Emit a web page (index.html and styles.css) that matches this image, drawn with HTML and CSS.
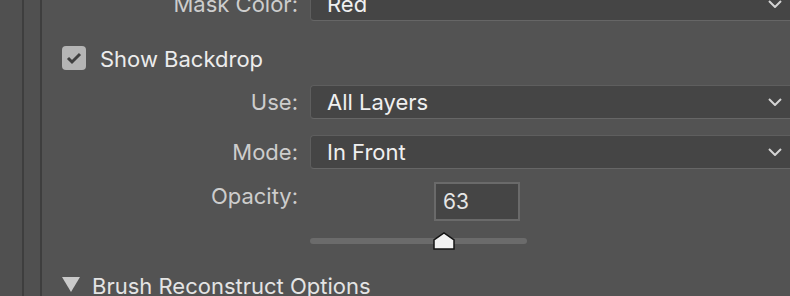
FILE: index.html
```html
<!DOCTYPE html>
<html lang="en">
<head>
    <meta charset="UTF-8">
    <title>Liquify Properties</title>
    <link rel="stylesheet" href="styles.css">
</head>
<body>
    <div class="app">
        <div class="rail"></div>
        <div class="gutter"></div>

        <div class="panel">
            <div class="field mask-row">
                <label class="field-label">Mask Color:</label>
                <div class="dropdown">
                    <span>Red</span>
                    <svg class="chevron" width="14" height="8" viewBox="0 0 14 8"><polyline points="1,1 7,7 13,1"/></svg>
                </div>
            </div>

            <div class="divider short"></div>

            <div class="check-row">
                <span class="checkbox">
                    <svg width="24" height="24" viewBox="0 0 24 24"><polyline points="6,12 10,16 18,8"/></svg>
                </span>
                <span class="check-label">Show Backdrop</span>
            </div>

            <div class="field use-row">
                <label class="field-label">Use:</label>
                <div class="dropdown">
                    <span>All Layers</span>
                    <svg class="chevron" width="14" height="8" viewBox="0 0 14 8"><polyline points="1,1 7,7 13,1"/></svg>
                </div>
            </div>

            <div class="field mode-row">
                <label class="field-label">Mode:</label>
                <div class="dropdown">
                    <span>In Front</span>
                    <svg class="chevron" width="14" height="8" viewBox="0 0 14 8"><polyline points="1,1 7,7 13,1"/></svg>
                </div>
            </div>

            <div class="field opacity-row">
                <label class="field-label">Opacity:</label>
                <div class="opacity-box">
                    <input class="number" type="text" value="63">
                </div>
            </div>

            <div class="field slider-row">
                <span></span>
                <div class="slider">
                    <div class="track"></div>
                    <svg class="thumb" width="22" height="18" viewBox="0 0 22 18"><path d="M1 17 V8 L11 1 L21 8 V17 Z"/></svg>
                </div>
            </div>

            <div class="divider"></div>

            <div class="section-head">
                <svg width="18" height="16" viewBox="0 0 18 16"><polygon points="0,1 18,1 9,16"/></svg>
                <span>Brush Reconstruct Options</span>
            </div>
        </div>
    </div>
</body>
</html>
```

FILE: styles.css
```css
body {
    margin: 0;
    background-color: #535353;
    font-family: 'Inter', 'Liberation Sans', sans-serif;
    font-size: 22px;
    line-height: 26px;
    color: #e8e8e8;
    overflow: hidden;
}

.app {
    display: flex;
    height: 296px;
    overflow: hidden;
}

.rail {
    width: 22px;
    border-right: 2px solid #3e3e3e;
    background-color: #505050;
}

.gutter {
    width: 16px;
    border-right: 2px solid #3e3e3e;
    background-color: #505050;
}

.panel {
    flex: 1;
    display: flex;
    flex-direction: column;
    margin-right: -4px;
}

.field {
    display: grid;
    grid-template-columns: 256px 1fr;
    column-gap: 12px;
    align-items: center;
}

.field-label {
    text-align: right;
    color: #cdcdcd;
}

.dropdown {
    height: 32px;
    display: flex;
    align-items: center;
    justify-content: space-between;
    padding: 0 11px 0 16px;
    background-color: #454545;
    border: 1px solid #5e5e5e;
    border-bottom-color: #666;
    border-radius: 4px;
    color: #f0f0f0;
}

.chevron polyline {
    fill: none;
    stroke: #d4d4d4;
    stroke-width: 2;
}

.mask-row {
    margin-top: -13px;
}

.divider {
    height: 2px;
    background-color: #3e3e3e;
    margin-top: 9px;
}

.divider.short {
    margin: 12px 0 0 16px;
}

.check-row {
    display: flex;
    align-items: center;
    gap: 14px;
    height: 24px;
    margin: 13px 0 0 20px;
}

.checkbox {
    width: 24px;
    height: 24px;
    border-radius: 4px;
    background-color: #b5b5b5;
}

.checkbox polyline {
    fill: none;
    stroke: #404040;
    stroke-width: 3;
}

.check-label {
    color: #ececec;
    line-height: 24px;
    padding-top: 1px;
}

.use-row {
    margin-top: 15px;
}

.mode-row {
    margin-top: 16px;
}

.opacity-row {
    margin-top: 13px;
    align-items: start;
}

.opacity-row .field-label {
    padding-top: 1px;
}

.opacity-box {
    padding-left: 124px;
}

.number {
    width: 82px;
    height: 35px;
    box-sizing: content-box;
    padding: 0;
    text-indent: 7px;
    background-color: #454545;
    border: 2px solid #6a6a6a;
    font-family: inherit;
    font-size: 21px;
    color: #e6e6e6;
    outline: none;
}

.slider-row {
    margin-top: 11px;
}

.slider {
    position: relative;
    width: 217px;
    height: 17px;
}

.track {
    margin-top: 6px;
    height: 6px;
    border-radius: 3px;
    background-color: #6b6b6b;
}

.thumb {
    position: absolute;
    left: 123px;
    top: 0;
}

.thumb path {
    fill: #f2f2f2;
    stroke: #151515;
    stroke-width: 1.5;
}

.section-head {
    display: flex;
    align-items: flex-start;
    gap: 12px;
    margin: 17px 0 0 20px;
    color: #e4e4e4;
}

.section-head svg {
    margin-top: 1px;
}

.section-head span {
    margin-top: -2px;
}

.section-head polygon {
    fill: #cacaca;
}
```
